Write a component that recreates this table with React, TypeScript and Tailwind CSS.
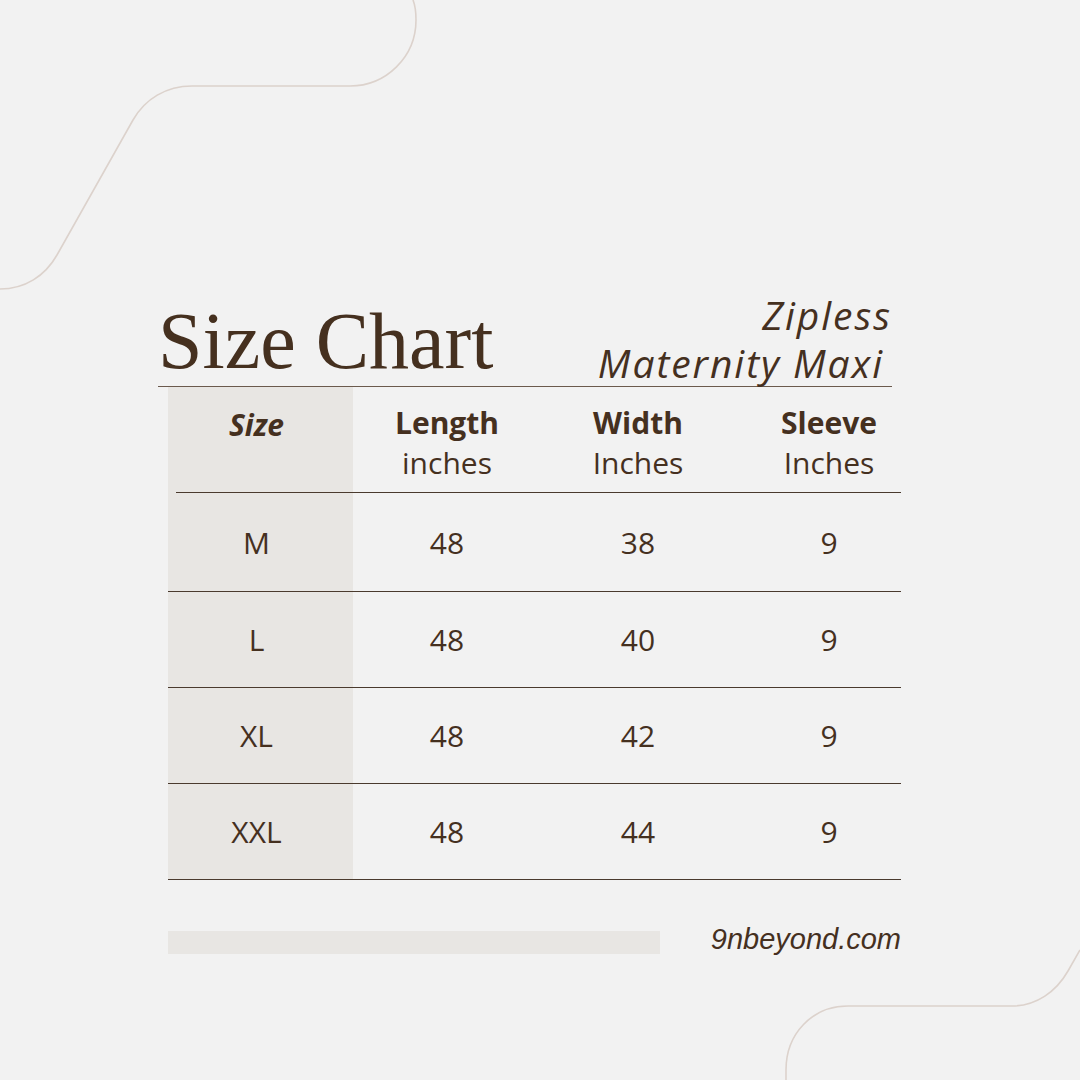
const rows = [
  { size: 'M', length: '48', width: '38', sleeve: '9' },
  { size: 'L', length: '48', width: '40', sleeve: '9' },
  { size: 'XL', length: '48', width: '42', sleeve: '9' },
  { size: 'XXL', length: '48', width: '44', sleeve: '9' },
]

const sans = "font-['Open_Sans',sans-serif]"

const Decor = () => (
  <svg
    className="pointer-events-none absolute inset-0"
    width={1080}
    height={1080}
    viewBox="0 0 1080 1080"
    fill="none"
  >
    <path
      d="M0 289 C25 289 45 276 57 255 L133 120 C145 99 166 86 192 86 L350 86 C386 86 416 57 416 20 C416 11 415 5 413 0"
      stroke="#dcd2cc"
      strokeWidth={1.6}
    />
    <path
      d="M1080 950 L1068 971 C1056 992 1036 1006 1012 1006 L848 1006 C812 1006 786 1034 786 1070 L786 1080"
      stroke="#dcd2cc"
      strokeWidth={1.6}
    />
  </svg>
)

export default function App() {
  return (
    <div className="relative h-[1080px] w-[1080px] overflow-hidden bg-[#f2f2f2] text-[#45301f]">
      <Decor />
      <div className="relative flex flex-col pt-[290px]">
        {/* Title */}
        <div className="ml-[158px] flex h-[97px] w-[734px] items-start justify-between border-b border-[#6b5a4d]">
          <h1 className="mt-[11px] font-['Liberation_Serif',serif] text-[80px] leading-none">Size Chart</h1>
          <div className={`mt-[1px] text-right text-[39px] italic leading-[48px] tracking-[0.05em] ${sans}`}>
            <div>Zipless</div>
            <div className="pr-[8px]">Maternity Maxi</div>
          </div>
        </div>

        {/* Table */}
        <div className={`ml-[168px] w-[733px] ${sans}`}>
          <div className="grid h-[105px] grid-cols-[185px_188px_194px_166px] text-[30px] leading-[40px]">
            <div className="bg-[#e8e6e3] pr-[8px] pt-[18px] text-center font-bold italic">Size</div>
            <div className="pt-[16px] text-center">
              <div className="font-bold">Length</div>
              <div>inches</div>
            </div>
            <div className="pt-[16px] text-center">
              <div className="font-bold">Width</div>
              <div>Inches</div>
            </div>
            <div className="pl-[22px] pt-[16px] text-center">
              <div className="font-bold">Sleeve</div>
              <div>Inches</div>
            </div>
          </div>
          <div className="flex h-px bg-[#4a3a2e]">
            <div className="w-[8px] bg-[#e8e6e3]" />
          </div>
          {rows.map((row, i) => (
            <div
              key={row.size}
              className={`grid grid-cols-[185px_188px_194px_166px] border-b border-[#4a3a2e] text-[30px] ${i === 0 ? 'h-[99px]' : 'h-[96px]'}`}
            >
              <div className="flex items-center justify-center bg-[#e8e6e3] pr-[8px]">{row.size}</div>
              <div className="flex items-center justify-center">{row.length}</div>
              <div className="flex items-center justify-center">{row.width}</div>
              <div className="flex items-center justify-center pl-[22px]">{row.sleeve}</div>
            </div>
          ))}

          {/* Footer */}
          <div className="mt-[51px] flex items-center justify-between">
            <div className="h-[23px] w-[492px] bg-[#e8e6e3]" />
            <span className="-mt-[6px] font-['Liberation_Sans',sans-serif] text-[29px] italic leading-none">9nbeyond.com</span>
          </div>
        </div>
      </div>
    </div>
  )
}
